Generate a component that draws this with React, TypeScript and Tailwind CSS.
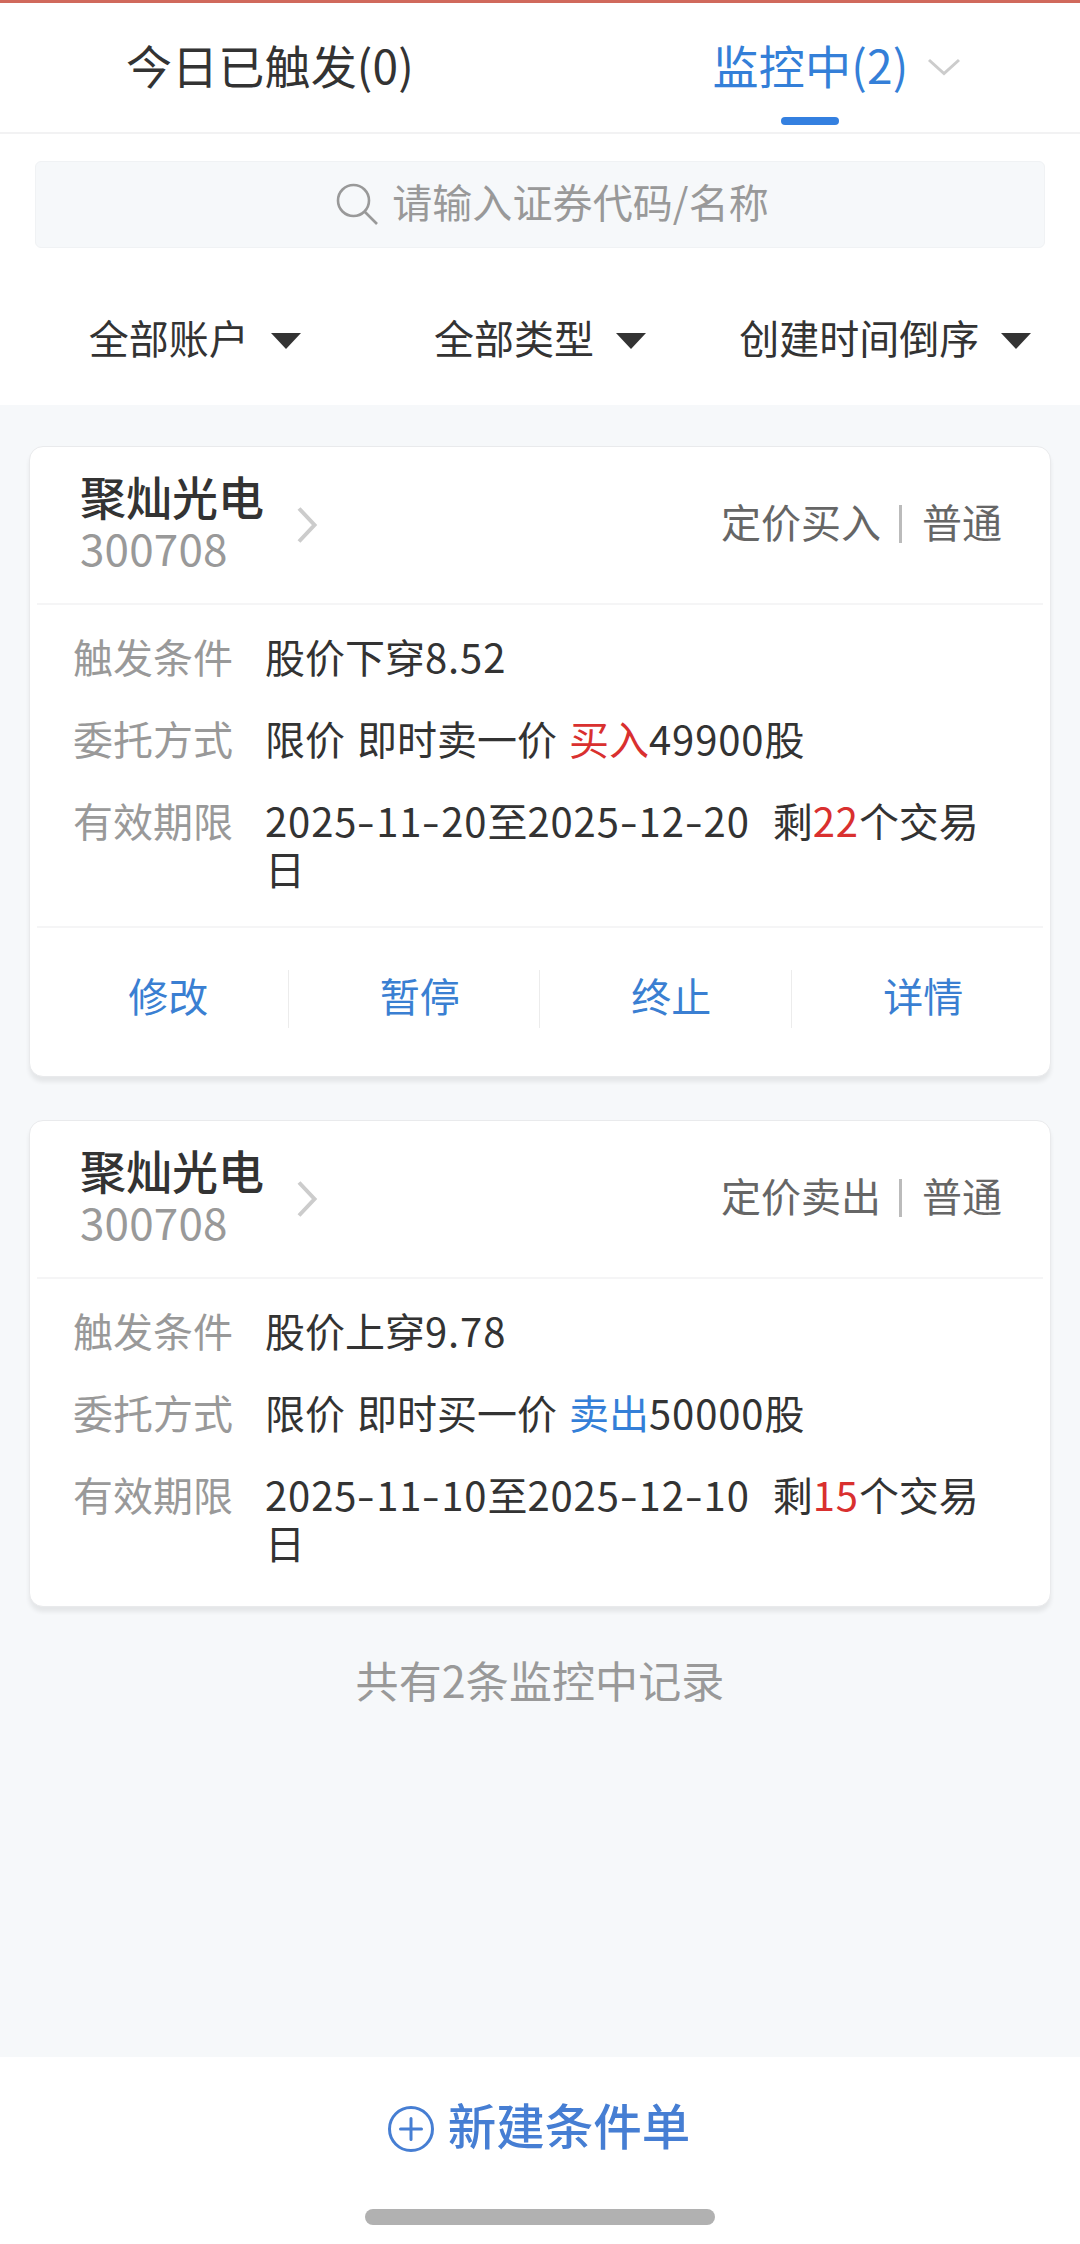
import React, { useState } from "react";

type Side = "buy" | "sell";

interface Order {
  id: number;
  name: string;
  code: string;
  side: Side;
  type: string;
  account: string;
  trigger: string;
  triggerPrice: string;
  priceMode: string;
  amount: string;
  start: string;
  end: string;
  daysLeft: number;
  showActions: boolean;
}

const ORDERS: Order[] = [
  {
    id: 1,
    name: "聚灿光电",
    code: "300708",
    side: "buy",
    type: "定价买入",
    account: "普通",
    trigger: "股价下穿",
    triggerPrice: "8.52",
    priceMode: "限价 即时卖一价",
    amount: "49900",
    start: "2025-11-20",
    end: "2025-12-20",
    daysLeft: 22,
    showActions: true,
  },
  {
    id: 2,
    name: "聚灿光电",
    code: "300708",
    side: "sell",
    type: "定价卖出",
    account: "普通",
    trigger: "股价上穿",
    triggerPrice: "9.78",
    priceMode: "限价 即时买一价",
    amount: "50000",
    start: "2025-11-10",
    end: "2025-12-10",
    daysLeft: 15,
    showActions: false,
  },
];

const FILTERS = ["全部账户", "全部类型", "创建时间倒序"];
const ACTIONS = ["修改", "暂停", "终止", "详情"];

// Digits are spaced a little wider than the surrounding text
const Num = ({ children }: { children: React.ReactNode }) => (
  <span className="tracking-[0.9px]">{children}</span>
);

// 2025-11-20, with widened hyphens
const DateText = ({ value }: { value: string }) => (
  <Num>
    {value.split("-").map((part, i) => (
      <React.Fragment key={i}>
        {i > 0 && (
          <span className="mx-[2px] inline-block scale-x-[1.3]">-</span>
        )}
        {part}
      </React.Fragment>
    ))}
  </Num>
);

const Row = ({
  label,
  children,
}: {
  label: string;
  children: React.ReactNode;
}) => (
  <div className="flex">
    <div className="w-[192px] shrink-0 text-[#999]">{label}</div>
    <div className="flex-1 text-[#333]">{children}</div>
  </div>
);

const OrderCard = ({ order }: { order: Order }) => (
  <div className="rounded-[14px] border border-[#e9eaec] bg-white px-[7px] shadow-[0_5px_4px_rgba(0,0,0,0.07)]">
    <div className="flex h-[156px] items-center justify-between pr-[41px] pb-[8px] pl-[43px]">
      <div className="flex items-center">
        <div>
          <div className="text-[46px] leading-[52px] font-medium text-[#333]">
            {order.name}
          </div>
          <div className="text-[44px] leading-[52px] tracking-[0.2px] text-[#999]">
            {order.code}
          </div>
        </div>
        <svg
          className="mt-2 ml-[32px] h-[38px] w-[22px]"
          viewBox="0 0 22 38"
          fill="none"
          stroke="#ccc"
          strokeWidth={4}
        >
          <path d="M3 2.5L18.5 19L3 35.5" />
        </svg>
      </div>
      <div className="flex items-center pb-[1px] text-[40px] leading-[48px] text-[#666]">
        <span>{order.type}</span>
        <span className="mt-[6px] mr-[20px] ml-[18px] h-[38px] w-[3px] bg-[#bbb]" />
        <span>{order.account}</span>
      </div>
    </div>

    <div
      className={`flex flex-col gap-[34px] border-t-2 border-[#f5f5f6] pt-[27px] pr-[30px] pl-[36px] text-[40px] leading-[48px] ${
        order.showActions ? "pb-[34px]" : "pb-[40px]"
      }`}
    >
      <Row label="触发条件">
        {order.trigger}
        <Num>{order.triggerPrice}</Num>
      </Row>
      <Row label="委托方式">
        <span className="[word-spacing:3px]">{order.priceMode} </span>
        <span
          className={order.side === "buy" ? "text-[#d9302f]" : "text-[#347fd8]"}
        >
          {order.side === "buy" ? "买入" : "卖出"}
        </span>
        <Num>{order.amount}</Num>股
      </Row>
      <Row label="有效期限">
        <DateText value={order.start} />至<DateText value={order.end} />
        <span className="ml-[5px]">&nbsp; 剩</span>
        <span className="text-[#d9302f]">
          <Num>{order.daysLeft}</Num>
        </span>
        个交易日
      </Row>
    </div>

    {order.showActions && (
      <div className="grid grid-cols-4 divide-x divide-[#ececec] border-t-2 border-[#f5f5f6] pt-[42px] pb-[48px]">
        {ACTIONS.map((action) => (
          <button
            key={action}
            className="h-[58px] pb-[8px] pl-[12px] text-[40px] leading-[50px] text-[#3a7fd2]"
          >
            {action}
          </button>
        ))}
      </div>
    )}
  </div>
);

function App() {
  const [orders] = useState<Order[]>(ORDERS);

  return (
    <div className="flex h-[2244px] w-[1080px] flex-col overflow-hidden bg-[#f6f8fa] font-['Noto_Sans_CJK_SC',sans-serif]">
      {/* Tabs */}
      <div className="grid h-[134px] grid-cols-2 border-t-3 border-b-2 border-t-[#d0695c] border-b-[#f2f2f3] bg-white text-[46px] leading-[60px] tracking-[0.2px]">
        <div className="pt-[31px] text-center text-[#333]">今日已触发(0)</div>
        <div className="flex flex-col items-center justify-between pt-[31px] pb-[7px] text-[#347fd8]">
          <div className="flex items-center gap-[19px] pl-[54px]">
            <span>监控中(2)</span>
            <svg
              className="mt-[6px] h-[18px] w-[34px]"
              viewBox="0 0 34 18"
              fill="none"
              stroke="#ccc"
              strokeWidth={3}
            >
              <path d="M2 2L17 15.5L32 2" />
            </svg>
          </div>
          <div className="h-[8px] w-[58px] rounded-full bg-[#3480e0]" />
        </div>
      </div>

      {/* Search and filters */}
      <div className="h-[271px] bg-white pt-[27px]">
        <div className="mx-[35px] flex h-[87px] items-center justify-center rounded-md border border-[#f0f2f4] bg-[#f6f8fa] pb-[7px] pl-[25px] text-[40px] leading-[48px] tracking-[0.1px] text-[#999]">
          <svg
            className="mt-[5px] mr-[14px] h-[42px] w-[42px]"
            viewBox="0 0 42 42"
            fill="none"
            stroke="currentColor"
            strokeWidth={2.6}
          >
            <circle cx="17.5" cy="17.5" r="15.5" />
            <path d="M28.5 28.5L41 41" />
          </svg>
          请输入证券代码/名称
        </div>
        <div className="mt-[60px] grid grid-cols-3 px-[22px]">
          {FILTERS.map((filter) => (
            <div
              key={filter}
              className="flex items-center justify-center gap-[22px] text-[40px] leading-[58px] text-[#333]"
            >
              {filter}
              <svg
                className="mt-[7px] h-[16px] w-[30px] fill-[#333]"
                viewBox="0 0 30 16"
              >
                <path d="M0 0H30L15 16Z" />
              </svg>
            </div>
          ))}
        </div>
      </div>

      {/* Order list */}
      <div className="flex flex-1 flex-col gap-[43px] px-[29px] pt-[41px]">
        {orders.map((order) => (
          <OrderCard key={order.id} order={order} />
        ))}
        <div className="-mt-[1px] text-center text-[43px] leading-[60px] tracking-[0.1px] text-[#999]">
          共有{orders.length}条监控中记录
        </div>
      </div>

      {/* Bottom bar */}
      <div className="flex h-[187px] flex-col items-center justify-between bg-white pt-[35px] pb-[19px]">
        <button className="flex items-center gap-[13px] pr-[3px] text-[48.5px] leading-[64px] font-medium text-[#467ed3]">
          <svg
            className="mt-[9px] h-[48px] w-[48px]"
            viewBox="0 0 48 48"
            fill="none"
            stroke="currentColor"
            strokeWidth={3}
            strokeLinecap="round"
          >
            <circle cx="24" cy="24" r="21.5" />
            <path d="M24 13.5V34.5M13.5 24H34.5" />
          </svg>
          新建条件单
        </button>
        <div className="h-[16px] w-[350px] rounded-full bg-[#b1b1b1]" />
      </div>
    </div>
  );
}

export default App;
